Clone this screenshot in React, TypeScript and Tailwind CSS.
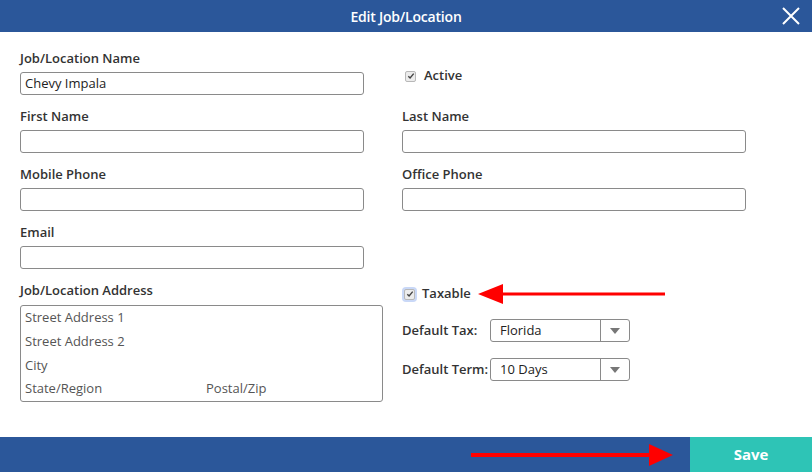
import React from 'react';

const font = { fontFamily: '"Open Sans", "Noto Sans", sans-serif' };

const Field: React.FC<{ label: string; value?: string }> = ({ label, value }) => (
  <div className="flex flex-col">
    <label className="text-[13px] leading-[18px] font-semibold text-[#333] mb-[5px]">{label}</label>
    <div className="h-[23px] w-[344px] border border-[#8a8a8a] rounded-[3px] px-[4px] text-[13px] leading-[21px] text-[#222]">
      {value}
    </div>
  </div>
);

const Check: React.FC<{ focus?: boolean }> = ({ focus }) => (
  <span
    className={`inline-flex items-center justify-center w-[11px] h-[11px] rounded-[2px] border border-[#b8b8b8] bg-[#ececec] ${
      focus ? 'ring-2 ring-[#c9d8f7]' : ''
    }`}
  >
    <svg width="8" height="8" viewBox="0 0 8 8">
      <path d="M1.3 4.2 L3.1 6 L6.7 1.6" stroke="#444" strokeWidth="1.4" fill="none" />
    </svg>
  </span>
);

const Select: React.FC<{ value: string }> = ({ value }) => (
  <div className="flex h-[23px] w-[140px] border border-[#8a8a8a] rounded-[3px] text-[13px] text-[#222]">
    <div className="flex-1 px-[9px] leading-[21px]">{value}</div>
    <div className="w-[29px] border-l border-[#8a8a8a] flex items-center justify-center">
      <svg width="10" height="6" viewBox="0 0 10 6">
        <path d="M0 0 H10 L5 6 Z" fill="#777" />
      </svg>
    </div>
  </div>
);

const AddressRow: React.FC<{ children: React.ReactNode }> = ({ children }) => (
  <div className="h-[24px] flex items-center px-[4px] text-[13px] text-[#555]">{children}</div>
);

export default function App() {
  return (
    <div className="w-[812px] h-[472px] bg-white flex flex-col relative overflow-hidden" style={font}>
      <div className="h-[32px] bg-[#2b579a] flex items-center justify-center relative">
        <span className="text-white text-[14px] font-semibold tracking-[-0.2px]">Edit Job/Location</span>
        <svg className="absolute right-[12px] top-[7px]" width="18" height="18" viewBox="0 0 18 18">
          <path d="M1 1 L17 17 M17 1 L1 17" stroke="white" strokeWidth="2" />
        </svg>
      </div>

      <div className="flex-1 flex px-[20px] pt-[17px] gap-[38px]">
        <div className="flex flex-col gap-[12px] w-[344px]">
          <Field label="Job/Location Name" value="Chevy Impala" />
          <Field label="First Name" />
          <Field label="Mobile Phone" />
          <Field label="Email" />
          <div className="flex flex-col">
            <label className="text-[13px] leading-[18px] font-semibold text-[#333] mb-[6px]">Job/Location Address</label>
            <div className="w-[363px] h-[97px] border border-[#8a8a8a] rounded-[3px] flex flex-col">
              <AddressRow>Street Address 1</AddressRow>
              <AddressRow>Street Address 2</AddressRow>
              <AddressRow>City</AddressRow>
              <AddressRow>
                <span className="w-[181px]">State/Region</span>
                <span>Postal/Zip</span>
              </AddressRow>
            </div>
          </div>
        </div>

        <div className="flex flex-col">
          <div className="h-[46px] flex items-center gap-[8px] pl-[3px] pt-[8px]">
            <Check />
            <span className="text-[13px] font-semibold text-[#333]">Active</span>
          </div>
          <div className="flex flex-col gap-[12px] mt-[12px]">
            <Field label="Last Name" />
            <Field label="Office Phone" />
          </div>
          <div className="h-[74px]" />
          <div className="relative flex items-center gap-[7px] pl-[2px] h-[18px]">
            <Check focus />
            <span className="text-[13px] font-semibold text-[#333]">Taxable</span>
            <svg className="absolute left-[76px] top-[-2px]" width="190" height="22" viewBox="0 0 190 22">
              <path d="M0 11 L25 1 L25 21 Z" fill="#f00" />
              <path d="M24 11 H187" stroke="#f00" strokeWidth="3" />
            </svg>
          </div>
          <div className="flex flex-col gap-[16px] mt-[16px]">
            <div className="flex items-center">
              <span className="w-[88px] text-[13px] font-semibold text-[#333]">Default Tax:</span>
              <Select value="Florida" />
            </div>
            <div className="flex items-center">
              <span className="w-[88px] text-[13px] font-semibold text-[#333]">Default Term:</span>
              <Select value="10 Days" />
            </div>
          </div>
        </div>
      </div>

      <div className="h-[35px] bg-[#2b579a] flex justify-end relative">
        <svg className="absolute left-[471px] top-[6px]" width="204" height="24" viewBox="0 0 204 24">
          <path d="M0 12 H182" stroke="#f00" strokeWidth="4" />
          <path d="M178 1 L202 12 L178 23 Z" fill="#f00" />
        </svg>
        <button className="w-[122px] h-full bg-[#2ec4b6] text-white text-[15px] font-bold">Save</button>
      </div>
    </div>
  );
}
